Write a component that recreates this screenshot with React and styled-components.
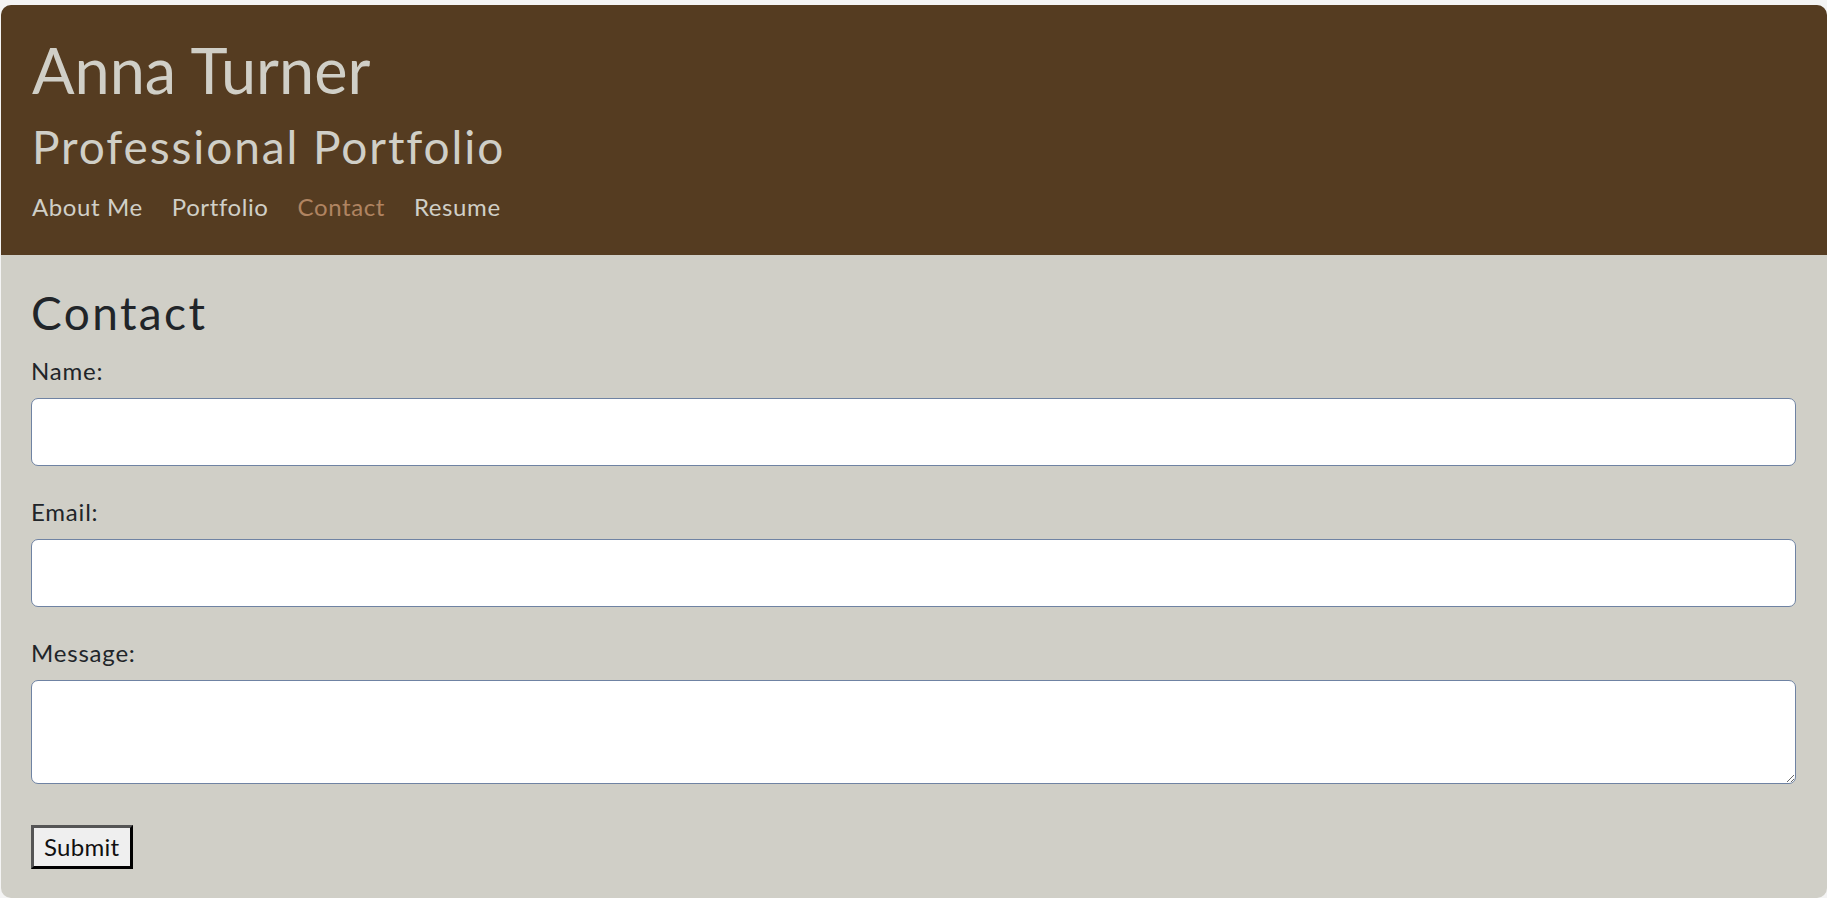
// ---------- portfolio: contact page ----------

import React from 'react';
import styled, { createGlobalStyle } from 'styled-components';

// ----- style -----

const GlobalStyle = createGlobalStyle`
    html, body {
        margin: 0;
        padding: 0;
        background-color: #f4f4f4;
    }
    body {
        font-family: Lato, "Open Sans", "Liberation Sans", sans-serif;
    }
    * {
        box-sizing: border-box;
    }
`

const Page = styled.div`
    padding: 5px 0 0 1px;
`

const Card = styled.div`
    min-height: 893px;
    border-radius: 10px;
    overflow: hidden;
    background-color: #d0cfc7;
    display: flex;
    flex-direction: column;
`

const Header = styled.header`
    background-color: #553c21;
    color: #d0cfc7;
    padding: 27px 31px 30px 31px;
`

const Name = styled.h1`
    margin: 0;
    font-size: 63px;
    font-weight: 400;
    line-height: 1.2;
`

const Subtitle = styled.h2`
    margin: 11px 0 0 0;
    font-size: 46px;
    font-weight: 400;
    line-height: 1.2;
    letter-spacing: 1.9px;
`

const Nav = styled.nav`
    margin-top: 15px;
    display: flex;
    flex-direction: row;
    gap: 29px;
`

const NavLink = styled.a`
    font-size: 24px;
    line-height: 1.5;
    letter-spacing: 0.6px;
    color: ${props => (props.active ? '#b08461' : '#d0cfc7')};
    text-decoration: none;
    cursor: pointer;
`

const Main = styled.main`
    padding: 30px 31px 29px 30px;
    color: #212529;
`

const Title = styled.h2`
    margin: 0 0 13px 0;
    font-size: 46px;
    font-weight: 400;
    line-height: 1.2;
    letter-spacing: 2.4px;
`

const Form = styled.form`
    display: flex;
    flex-direction: column;
`

const Field = styled.div`
    display: flex;
    flex-direction: column;
    margin-bottom: 28px;
`

const Label = styled.label`
    font-size: 24px;
    line-height: 1.5;
    letter-spacing: 0.8px;
    margin-bottom: 9px;
`

const Input = styled.input`
    width: 100%;
    height: 68px;
    border: 1px solid #6f83a3;
    border-radius: 7px;
    background-color: #ffffff;
    font-family: inherit;
    font-size: 24px;
    padding: 0 18px;
    outline: none;
`

const TextArea = styled.textarea`
    width: 100%;
    height: 104px;
    border: 1px solid #6f83a3;
    border-radius: 7px;
    background-color: #ffffff;
    font-family: inherit;
    font-size: 24px;
    padding: 10px 18px;
    outline: none;
`

const SubmitButton = styled.button`
    align-self: flex-start;
    margin-top: 13px;
    height: 44px;
    padding: 0 10px;
    font-family: inherit;
    font-size: 24px;
    letter-spacing: 0.3px;
    color: #111111;
    background-color: #efefef;
    border-style: solid;
    border-width: 3px;
    border-color: #555555 #000000 #000000 #555555;
    cursor: pointer;
`

// ----- komponent -----

const links = ['About Me', 'Portfolio', 'Contact', 'Resume'];

export default function App() {
    return (
        <Page>
            <GlobalStyle />
            <Card>
                <Header>
                    <Name>Anna Turner</Name>
                    <Subtitle>Professional Portfolio</Subtitle>
                    <Nav>
                        {links.map(link => (
                            <NavLink key={link} active={link === 'Contact'}>{link}</NavLink>
                        ))}
                    </Nav>
                </Header>
                <Main>
                    <Title>Contact</Title>
                    <Form onSubmit={e => e.preventDefault()}>
                        <Field>
                            <Label htmlFor="name">Name:</Label>
                            <Input id="name" type="text" />
                        </Field>
                        <Field>
                            <Label htmlFor="email">Email:</Label>
                            <Input id="email" type="email" />
                        </Field>
                        <Field>
                            <Label htmlFor="message">Message:</Label>
                            <TextArea id="message" />
                        </Field>
                        <SubmitButton type="submit">Submit</SubmitButton>
                    </Form>
                </Main>
            </Card>
        </Page>
    );
}
